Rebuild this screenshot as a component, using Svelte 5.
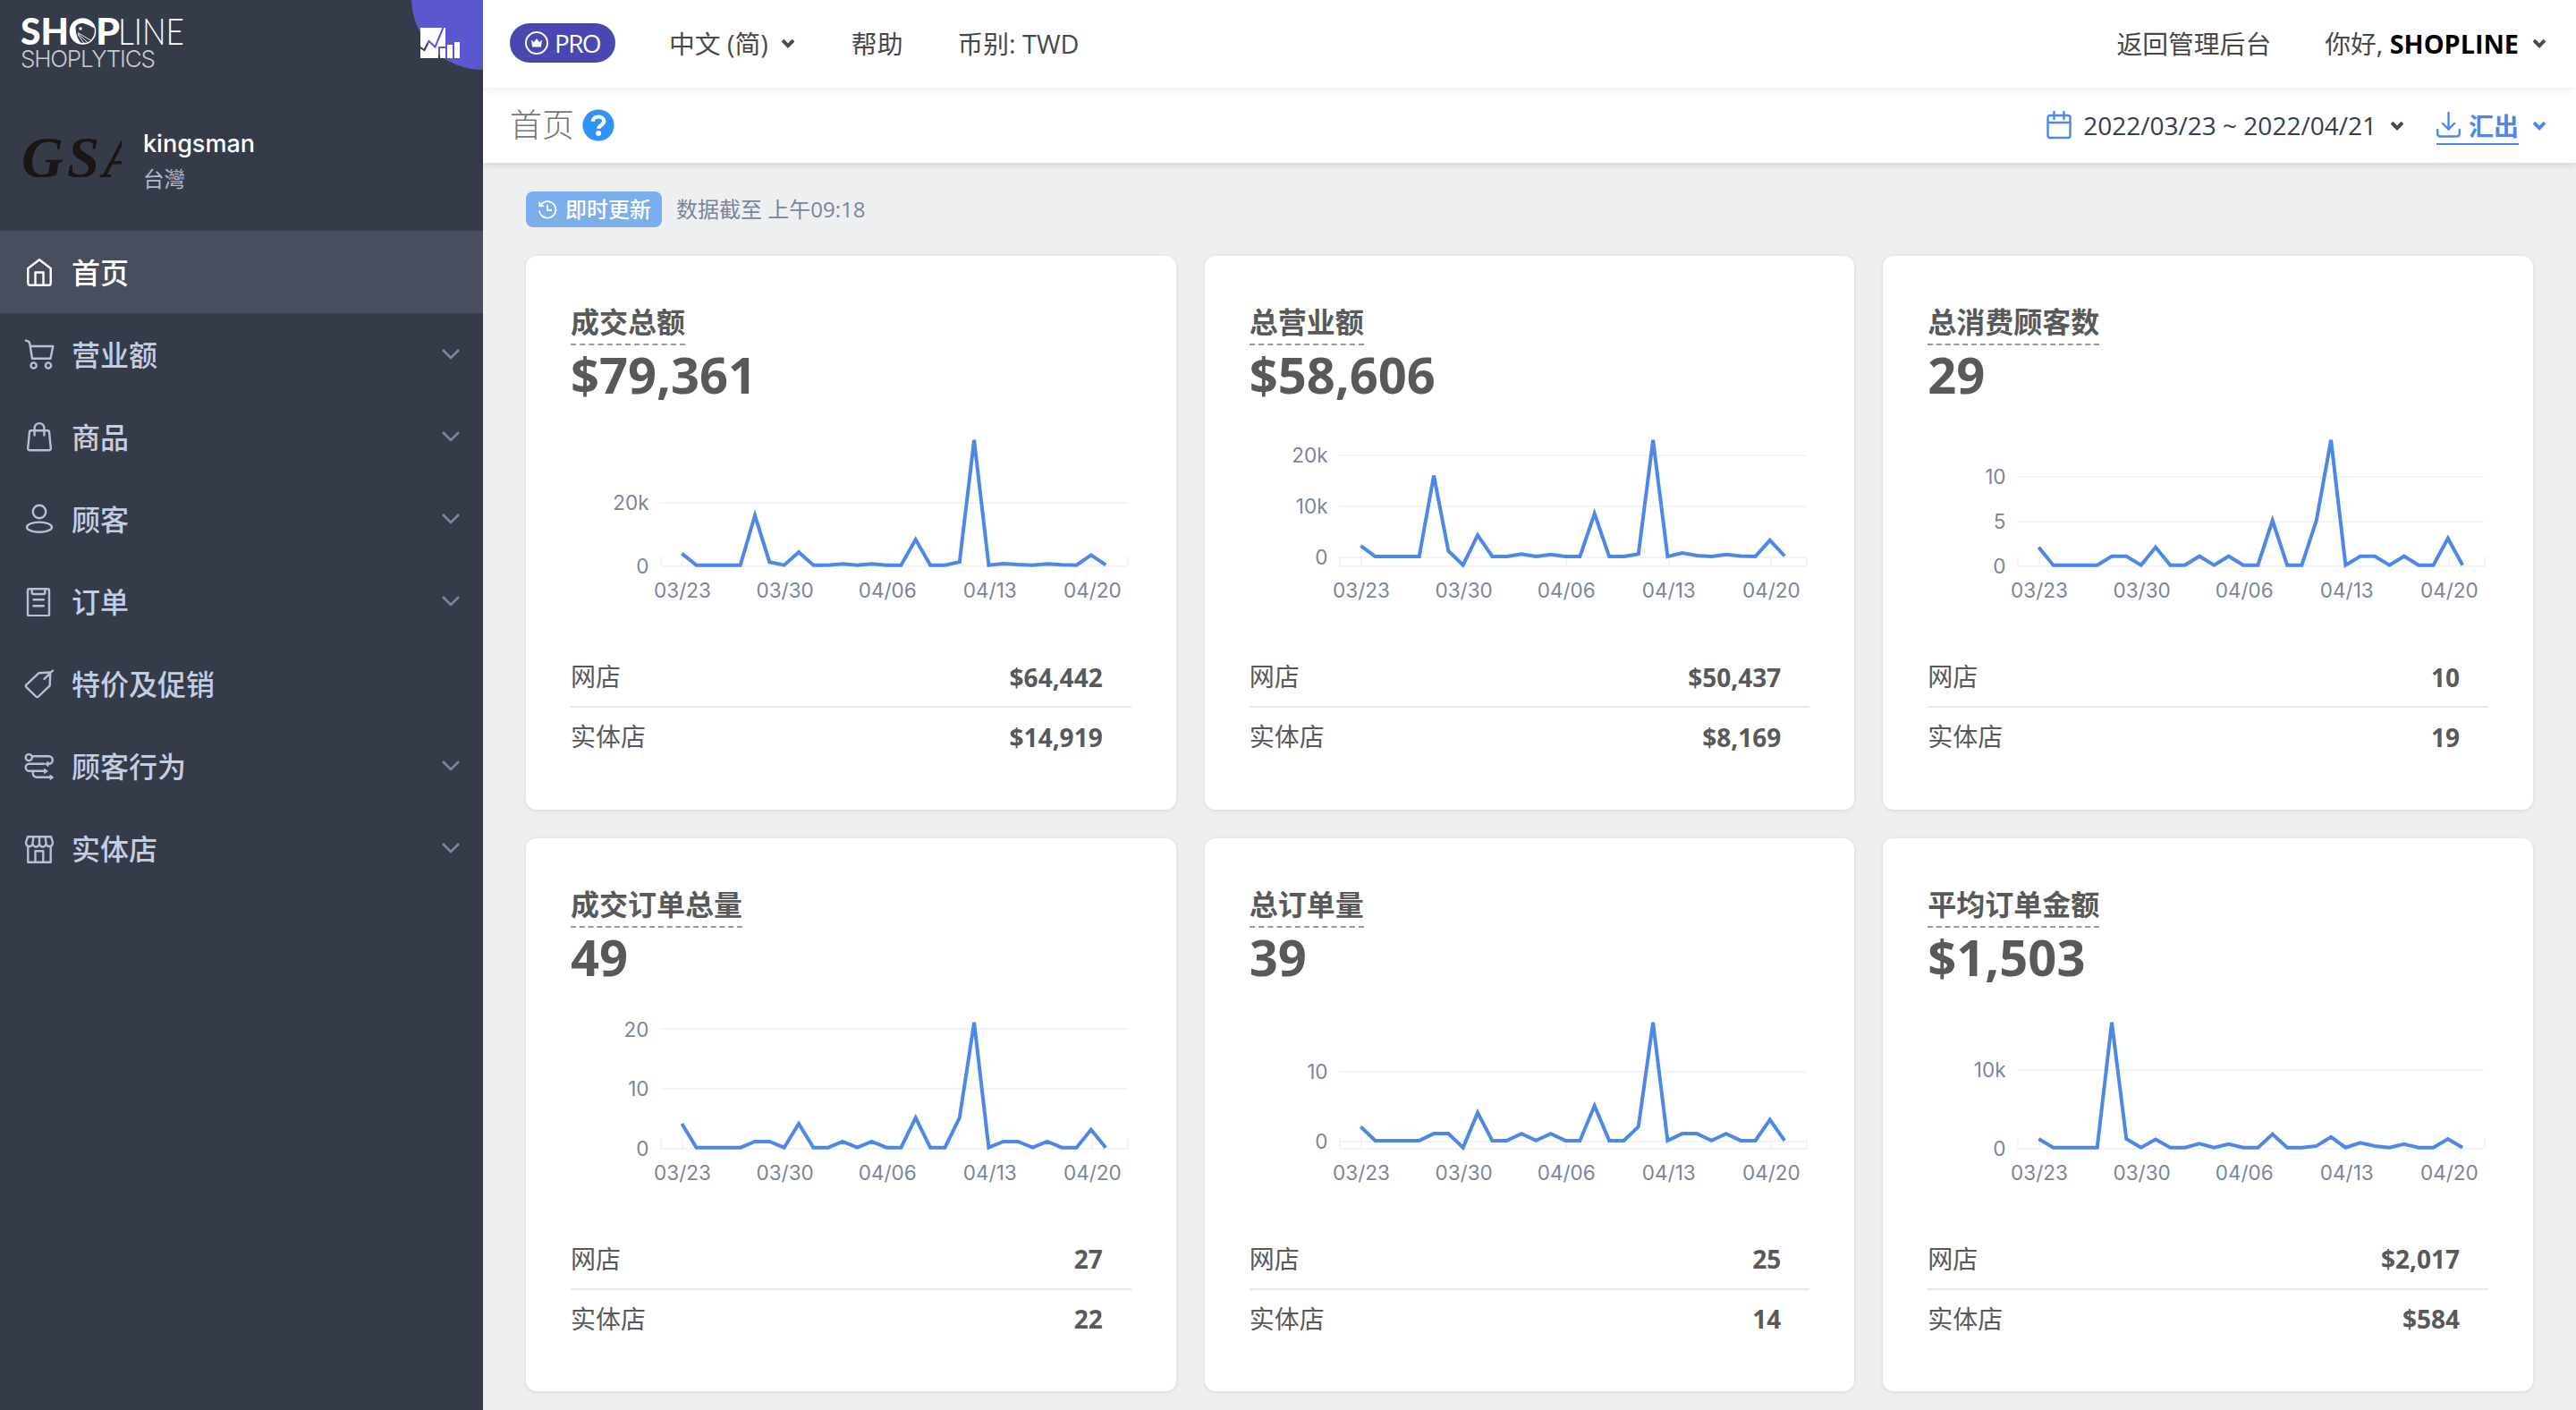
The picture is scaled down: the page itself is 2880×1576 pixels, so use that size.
<script lang="ts">
  interface NavItem {
    label: string;
    icon: string;
    active?: boolean;
    expandable?: boolean;
  }
  interface Metric {
    title: string;
    value: string;
    online: string;
    retail: string;
    ticks: [number, string][];
    data: number[];
  }

  const nav: NavItem[] = [
    { label: "首页", icon: "home", active: true },
    { label: "营业额", icon: "cart", expandable: true },
    { label: "商品", icon: "bag", expandable: true },
    { label: "顾客", icon: "user", expandable: true },
    { label: "订单", icon: "order", expandable: true },
    { label: "特价及促销", icon: "tag" },
    { label: "顾客行为", icon: "behavior", expandable: true },
    { label: "实体店", icon: "store", expandable: true },
  ];

  const metrics: Metric[] = [
    {
      title: "成交总额",
      value: "$79,361",
      online: "$64,442",
      retail: "$14,919",
      ticks: [[0, "0"], [20, "20k"]],
      data: [3.7, 0, 0, 0, 0, 15.7, 1, 0, 4.1, 0, 0, 0.4, 0, 0.4, 0, 0, 8.1, 0, 0, 1, 39.5, 0, 0.5, 0.2, 0, 0.4, 0.1, 0, 3.2, 0.1],
    },
    {
      title: "总营业额",
      value: "$58,606",
      online: "$50,437",
      retail: "$8,169",
      ticks: [[0, "0"], [10, "10k"], [20, "20k"]],
      data: [2.1, 0, 0, 0, 0, 15.9, 1.1, -1.7, 4.2, 0, 0, 0.5, 0, 0.4, 0, 0, 8.4, 0, 0, 0.5, 22.9, 0, 0.7, 0.2, 0, 0.4, 0.1, 0, 3.2, 0.1],
    },
    {
      title: "总消费顾客数",
      value: "29",
      online: "10",
      retail: "19",
      ticks: [[0, "0"], [5, "5"], [10, "10"]],
      data: [2, 0, 0, 0, 0, 1, 1, 0, 2, 0, 0, 1, 0, 1, 0, 0, 5, 0, 0, 5, 14, 0, 1, 1, 0, 1, 0, 0, 3, 0],
    },
    {
      title: "成交订单总量",
      value: "49",
      online: "27",
      retail: "22",
      ticks: [[0, "0"], [10, "10"], [20, "20"]],
      data: [4, 0, 0, 0, 0, 1, 1, 0, 4, 0, 0, 1, 0, 1, 0, 0, 5, 0, 0, 5, 21, 0, 1, 1, 0, 1, 0, 0, 3, 0],
    },
    {
      title: "总订单量",
      value: "39",
      online: "25",
      retail: "14",
      ticks: [[0, "0"], [10, "10"]],
      data: [2, 0, 0, 0, 0, 1, 1, -1, 4, 0, 0, 1, 0, 1, 0, 0, 5, 0, 0, 2, 17, 0, 1, 1, 0, 1, 0, 0, 3, 0],
    },
    {
      title: "平均订单金额",
      value: "$1,503",
      online: "$2,017",
      retail: "$584",
      ticks: [[0, "0"], [10, "10k"]],
      data: [1.1, 0, 0, 0, 0, 15.9, 1.1, 0, 1.05, 0, 0, 0.5, 0, 0.45, 0, 0, 1.7, 0, 0, 0.2, 1.35, 0, 0.6, 0.2, 0, 0.45, 0, 0, 1.1, 0],
    },
  ];

  const dates = ["03/23", "03/30", "04/06", "04/13", "04/20"];

  // plot area inside the 626px wide chart
  const LEFT = 101;
  const RIGHT = 623;
  const TOP = 29.7;
  const BOTTOM = 169.7;
  const FIRST = 124.3;
  const STEP = 16.34;

  const px = (i: number) => FIRST + i * STEP;

  function py(v: number, data: number[]) {
    const max = Math.max(...data);
    const min = Math.min(...data);
    return BOTTOM - ((v - min) / (max - min)) * (BOTTOM - TOP);
  }

  function points(data: number[]) {
    return data.map((v, i) => `${px(i).toFixed(1)},${py(v, data).toFixed(1)}`).join(" ");
  }
</script>

{#snippet caret(cls: string)}
  <svg class="caret {cls}" width="16" height="11" viewBox="0 0 16 11">
    <path d="M2 2.2 8 8.2 14 2.2" />
  </svg>
{/snippet}

<div class="app">
  <aside>
    <div class="brand">
      <svg class="brand-name" width="220" height="90" viewBox="0 0 220 90">
        <g fill="#fff" font-family="Lato, sans-serif" font-size="41">
          <text x="23" y="50" font-weight="900" textLength="54" lengthAdjust="spacingAndGlyphs">SH</text>
          <text x="107" y="50" font-weight="900" textLength="27" lengthAdjust="spacingAndGlyphs">P</text>
          <text x="132" y="50" font-weight="300" textLength="74" lengthAdjust="spacingAndGlyphs">LINE</text>
        </g>
        <circle cx="92.5" cy="35" r="14.8" fill="#fff" />
        <path
          d="M84.5 30c2-3.5 6-4.800 10-3.600 4 1.200 8 3.200 11.200 5.200.6 6-1 10.500-4.800 13.800-3 2.200-6.500 2.800-10.500 2.400C86 43 84.500 36 84.500 30Z"
          fill="#363b4a"
        />
        <circle cx="90" cy="32" r="1.7" fill="#fff" />
        <path d="M87 36.5 103 46M87 37.5 98.5 48M87 38.5 94 48.5" stroke="#fff" stroke-width=".9" fill="none" />
      </svg>
      <span class="product">SHOPLYTICS</span>
      <svg class="corner" width="80" height="78" viewBox="0 0 80 78">
        <mask id="cut">
          <path d="M0 0h80v78H0z" fill="#fff" />
          <path d="m9 52.5 5.500 3.500 5-10 7 6.500L36 29.500" fill="none" stroke="#000" stroke-width="2" />
          <path d="M31 70V53h8" fill="none" stroke="#000" stroke-width="2" />
          <path d="M38 48h10v20H38z" fill="#000" />
        </mask>
        <circle cx="80" cy="-2" r="80" fill="#5b58cf" />
        <path d="M10 31h28v34H10z" fill="#fff" mask="url(#cut)" />
        <path d="M32.5 55h5v10h-5zM40 50h6v15h-6zM48 47h6v18h-6z" fill="#fff" />
      </svg>
    </div>

    <div class="shop">
      <div class="shop-logo">GSA</div>
      <div class="shop-info">
        <div class="shop-name">kingsman</div>
        <div class="shop-region">台灣</div>
      </div>
    </div>

    <nav>
      {#each nav as item}
        <div class="nav-item" class:active={item.active}>
          <svg class="nav-icon" width="34" height="34" viewBox="-1 -1 34 34">
            {#if item.icon === "home"}
              <path d="M16 2.2 28.7 12V28.7a2 2 0 0 1-2 2H5.3a2 2 0 0 1-2-2V12ZM11.5 30.5v-14h9v14" />
            {:else if item.icon === "cart"}
              <path d="M.8.6C3.5.8 4.8 2 5.3 4L8 20.7h20.5L31.3 7H6" />
              <circle cx="9.6" cy="28.5" r="3.1" />
              <circle cx="26" cy="28.5" r="3.1" />
            {:else if item.icon === "bag"}
              <path d="M6.5 9.3h19a1.5 1.5 0 0 1 1.5 1.3l1.8 18.6a2 2 0 0 1-2 2.1H5.2a2 2 0 0 1-2-2.1L5 10.6a1.5 1.5 0 0 1 1.5-1.3Z" />
              <path d="M10.6 14.5V6.5a5.4 5.4 0 0 1 10.8 0v8" />
            {:else if item.icon === "user"}
              <circle cx="16" cy="8" r="7.2" />
              <ellipse cx="16" cy="25.2" rx="14" ry="5.6" />
            {:else if item.icon === "order"}
              <rect x="3" y="2.2" width="24" height="30" rx="1.5" />
              <path d="M7.7 2.2v4.3a1.5 1.5 0 0 0 1.5 1.5h11.6a1.5 1.5 0 0 0 1.5-1.5V2.2M9.5 14.3h11.3M9.5 21.3h11.3" />
            {:else if item.icon === "tag"}
              <path d="m15.3 4.3 12.9-.8-.5 14.8L15 30.5a2 2 0 0 1-2.8 0L1.5 20.2a2 2 0 0 1 0-2.8ZM31 1.5l-9.5 9.3" />
            {:else if item.icon === "behavior"}
              <circle cx="4.3" cy="6.7" r="3.6" />
              <path d="M8 5.2h18.5a4.3 4.3 0 0 1 0 8.6M21 13.8H4.7a4 4 0 0 0 0 8H23M8.8 22v2.5a4.2 4.2 0 0 0 4.2 4.2h17" />
              <path class="solid" d="m22.5 13.8 3.5-2.5v5ZM25 21.8l-3.5-2.5v5ZM31.5 28.7 28 26.2v5Z" />
            {:else}
              <path d="M3.3 14.5v17.3h25.4V14.5M11.5 31.5V19.2h8.800v12.300M3 3.200h26L31 9.500c0 6-7.500 6-7.500.5 0 6-7.500 6-7.500 0 0 6-7.500 6-7.500 0C8.500 15.500 1 15.500 1 9.500ZM9.500 3.200l-1 6.800M16 3.200V10M22.500 3.200l1 6.800" />
            {/if}
          </svg>
          <span class="nav-label">{item.label}</span>
          {#if item.expandable}
            <svg class="nav-arrow" width="22" height="14" viewBox="0 0 22 14">
              <path d="M2 2 11 11 20 2" />
            </svg>
          {/if}
        </div>
      {/each}
    </nav>
  </aside>

  <main>
    <header class="topbar">
      <span class="pro">
        <svg width="28" height="28" viewBox="0 0 28 28">
          <circle cx="14" cy="14" r="12" fill="none" stroke="#fff" stroke-width="2" />
          <path d="m7.8 10.8 3.3 2.2L14 9l2.9 4 3.3-2.2-1.4 7.7H9.2Z" fill="#fff" />
        </svg>
        PRO
      </span>
      <span class="link lang">中文 (简)</span>
      {@render caret("dark")}
      <span class="link help-link">帮助</span>
      <span class="link">币别: TWD</span>
      <span class="link back">返回管理后台</span>
      <span class="link hello">你好, <b>SHOPLINE</b></span>
      {@render caret("dark")}
    </header>

    <div class="titlebar">
      <h1>首页</h1>
      <svg class="help" width="36" height="36" viewBox="0 0 36 36">
        <circle cx="18" cy="18" r="17.6" fill="#3093f9" />
        <path d="M11.8 13.8c.4-3.6 2.9-5.3 6.2-5.3 3.6 0 6.2 2 6.2 5 0 4.5-6 4.5-6 8.3" fill="none" stroke="#fff" stroke-width="4.2" />
        <circle cx="18.1" cy="27" r="2.9" fill="#fff" />
      </svg>
      <div class="range">
        <svg width="28" height="32" viewBox="0 0 28 32">
          <path d="M4 5h20a2.500 2.500 0 0 1 2.500 2.500v20A2.500 2.500 0 0 1 24 30H4a2.500 2.500 0 0 1-2.500-2.500v-20A2.500 2.500 0 0 1 4 5ZM1.500 13h25M8.500 1v8M19.500 1v8" />
        </svg>
        <span>2022/03/23 ~ 2022/04/21</span>
        {@render caret("dark")}
      </div>
      <div class="export">
        <span class="export-link">
          <svg width="27" height="30" viewBox="0 0 27 30">
            <path d="M13.5 1v18M7 13l6.500 6.500L20 13M1.200 20v4.500A3 3 0 0 0 4.200 27.500h18.600a3 3 0 0 0 3-3V20" />
          </svg>
          汇出
        </span>
        {@render caret("blue")}
      </div>
    </div>

    <div class="content">
      <div class="update">
        <span class="refresh">
          <svg width="22" height="22" viewBox="0 0 22 22">
            <path d="M3.3 6.5A9.2 9.2 0 1 1 2 12.5M2.2 2.5v4.7h5M11 6v6h5" />
          </svg>
          <span>即时更新</span>
        </span>
        <span class="until">数据截至 上午09:18</span>
      </div>

      <div class="grid">
        {#each metrics as m}
          <section class="card">
            <h2>{m.title}</h2>
            <div class="value">{m.value}</div>
            <svg class="chart" width="626" height="262" viewBox="0 0 626 262">
              <g class="lines">
                {#each m.ticks as [v]}
                  <path d="M{LEFT - 1} {Math.round(py(v, m.data) + 1)}H{RIGHT - 1}" />
                {/each}
                <path d="M{LEFT - 1} 171H{RIGHT + 1}M{LEFT} 160v11M{RIGHT} 160v11" />
                {#each dates as _, i}
                  <path d="M{Math.round(125 + i * 114.6)} 160v11" />
                {/each}
              </g>
              <polyline points={points(m.data)} />
              {#each m.ticks as [v, label]}
                <text x="87.5" y={py(v, m.data) + 9.2} text-anchor="end">{label}</text>
              {/each}
              {#each dates as d, i}
                <text x={125 + i * 114.6} y="205.5" text-anchor="middle">{d}</text>
              {/each}
            </svg>
            <div class="row">
              <span>网店</span>
              <b>{m.online}</b>
            </div>
            <div class="row">
              <span>实体店</span>
              <b>{m.retail}</b>
            </div>
          </section>
        {/each}
      </div>
    </div>
  </main>
</div>

<style>
  :global(body) {
    margin: 0;
    overflow: hidden;
  }
  .app {
    display: flex;
    width: 2880px;
    height: 1576px;
    overflow: hidden;
    background: #edeff1;
    font-family: "Open Sans", "Noto Sans CJK SC", sans-serif;
    font-size: 28px;
    color: #484848;
  }
  svg {
    display: block;
    flex: none;
  }

  /* sidebar */
  aside {
    flex: none;
    width: 540px;
    background: #363b4a;
  }
  .brand {
    position: relative;
    height: 150px;
  }
  .product {
    position: absolute;
    left: 23px;
    top: 50px;
    font: 300 26px/32px Inter, sans-serif;
    letter-spacing: -1.2px;
    color: #c9cacf;
  }
  .corner {
    position: absolute;
    right: 0;
    top: 0;
  }
  .shop {
    display: flex;
    gap: 24px;
    height: 108px;
    padding-left: 24px;
  }
  .shop-logo {
    flex: none;
    width: 112px;
    height: 44px;
    margin-top: 4px;
    overflow: hidden;
    font: italic bold 65px/44px "Liberation Serif", serif;
    letter-spacing: 4px;
    color: #1b1516;
  }
  .shop-name {
    margin-top: -6px;
    font: 500 27px/34px Inter, sans-serif;
    color: #fff;
  }
  .shop-region {
    margin-top: 4px;
    font-size: 23.5px;
    line-height: 34px;
    font-family: "Noto Sans CJK TC", sans-serif;
    color: #b4bacb;
  }
  .nav-item {
    display: flex;
    align-items: center;
    height: 92px;
    padding: 0 25px 0 27px;
    color: #c5cde0;
  }
  .nav-item.active {
    background: #484e5d;
    color: #fff;
  }
  .nav-icon {
    fill: none;
    stroke: #b7bfd2;
    stroke-width: 2.4;
    stroke-linejoin: round;
    stroke-linecap: round;
  }
  .active .nav-icon {
    stroke: #fff;
  }
  .nav-icon .solid {
    fill: #b7bfd2;
    stroke-width: 1;
  }
  .nav-label {
    margin-left: 19px;
    padding-bottom: 3px;
    font-size: 32px;
    font-weight: 500;
    line-height: 48px;
    font-family: "Noto Sans CJK SC", sans-serif;
  }
  .nav-arrow {
    margin-left: auto;
    fill: none;
    stroke: #7d869b;
    stroke-width: 2.6;
  }

  /* top bars */
  main {
    flex: 1;
  }
  .topbar {
    position: relative;
    z-index: 2;
    display: flex;
    align-items: center;
    height: 98px;
    box-sizing: border-box;
    padding: 0 33px 2px 30px;
    background: #fff;
    box-shadow: 0 2px 10px rgba(0, 0, 0, 0.08);
    white-space: nowrap;
  }
  .pro {
    display: flex;
    align-items: center;
    gap: 6px;
    width: 118px;
    height: 44px;
    box-sizing: border-box;
    padding-left: 16px;
    border-radius: 22px;
    background: #4a48b0;
    color: #fff;
    letter-spacing: -1.7px;
  }
  .link {
    padding-bottom: 2px;
    font-size: 28.8px;
  }
  .lang {
    margin: 0 14px 0 60px;
  }
  .help-link {
    margin: 0 61px 0 63px;
  }
  .back {
    margin-left: auto;
  }
  .hello {
    margin: 0 15px 0 60px;
  }
  .hello b {
    color: #000;
  }
  .caret {
    fill: none;
    stroke: #484848;
    stroke-width: 3.8;
  }
  .caret.blue {
    stroke: #4d88e6;
  }
  .titlebar {
    position: relative;
    z-index: 1;
    display: flex;
    align-items: center;
    height: 84px;
    box-sizing: border-box;
    padding: 0 33px 0 30px;
    background: #fff;
    box-shadow: 0 2px 8px rgba(0, 0, 0, 0.12);
  }
  h1 {
    margin: 0 9px 0 0;
    font-size: 36px;
    font-weight: 300;
    line-height: 50px;
    color: #777;
  }
  .range {
    display: flex;
    align-items: center;
    margin-left: auto;
    color: #363d4d;
    white-space: nowrap;
  }
  .range svg:first-child,
  .export-link svg {
    fill: none;
    stroke: #4d88e6;
    stroke-width: 2.4;
    stroke-linecap: round;
  }
  .range span {
    margin: 0 15px 0 13px;
  }
  .export {
    display: flex;
    align-items: center;
    gap: 15px;
    margin-left: 36px;
  }
  .export-link {
    display: flex;
    align-items: center;
    gap: 9px;
    height: 40px;
    margin-top: 2px;
    border-bottom: 2px solid #4d88e6;
    color: #4d88e6;
    font-weight: 700;
  }

  /* dashboard */
  .content {
    padding: 32px 48px 0;
  }
  .update {
    display: flex;
    align-items: center;
    gap: 16px;
    height: 40px;
    font-size: 24px;
    color: #7b859b;
  }
  .until,
  .refresh span {
    padding-bottom: 3px;
  }
  .refresh {
    display: flex;
    align-items: center;
    gap: 9px;
    width: 152px;
    height: 40px;
    box-sizing: border-box;
    padding-left: 13px;
    border-radius: 8px;
    background: #7cadec;
    color: #fff;
    font-family: "Noto Sans CJK SC", sans-serif;
    font-weight: 500;
    white-space: nowrap;
  }
  .refresh svg {
    fill: none;
    stroke: #fff;
    stroke-width: 1.8;
  }
  .grid {
    display: grid;
    grid-template-columns: repeat(3, 1fr);
    grid-auto-rows: 618.5px;
    gap: 32px;
    margin-top: 32px;
  }
  .card {
    box-sizing: border-box;
    padding: 50px 50px 0;
    border-radius: 12px;
    background: #fff;
    box-shadow: 0 1px 5px rgba(0, 0, 0, 0.1);
    color: #595959;
  }
  h2 {
    display: table;
    margin: 0;
    padding-bottom: 3px;
    border-bottom: 2px dashed #999;
    font-size: 32px;
    font-weight: 700;
    line-height: 45px;
    font-family: "Noto Sans CJK SC", sans-serif;
  }
  .value {
    margin: 2px 0 14px;
    font-size: 56px;
    font-weight: 700;
    line-height: 60px;
  }
  .lines path {
    stroke: #f4f4f5;
    stroke-width: 2;
  }
  .chart polyline {
    fill: none;
    stroke: #4d88e6;
    stroke-width: 4;
  }
  .chart text {
    font-family: Inter, sans-serif;
    font-size: 22.5px;
    fill: #7b859b;
  }
  .row {
    display: flex;
    align-items: center;
    justify-content: space-between;
    height: 65px;
    padding-right: 32px;
  }
  .row span {
    padding-bottom: 3px;
  }
  .row + .row {
    border-top: 2px solid #e7e8ec;
  }
</style>
